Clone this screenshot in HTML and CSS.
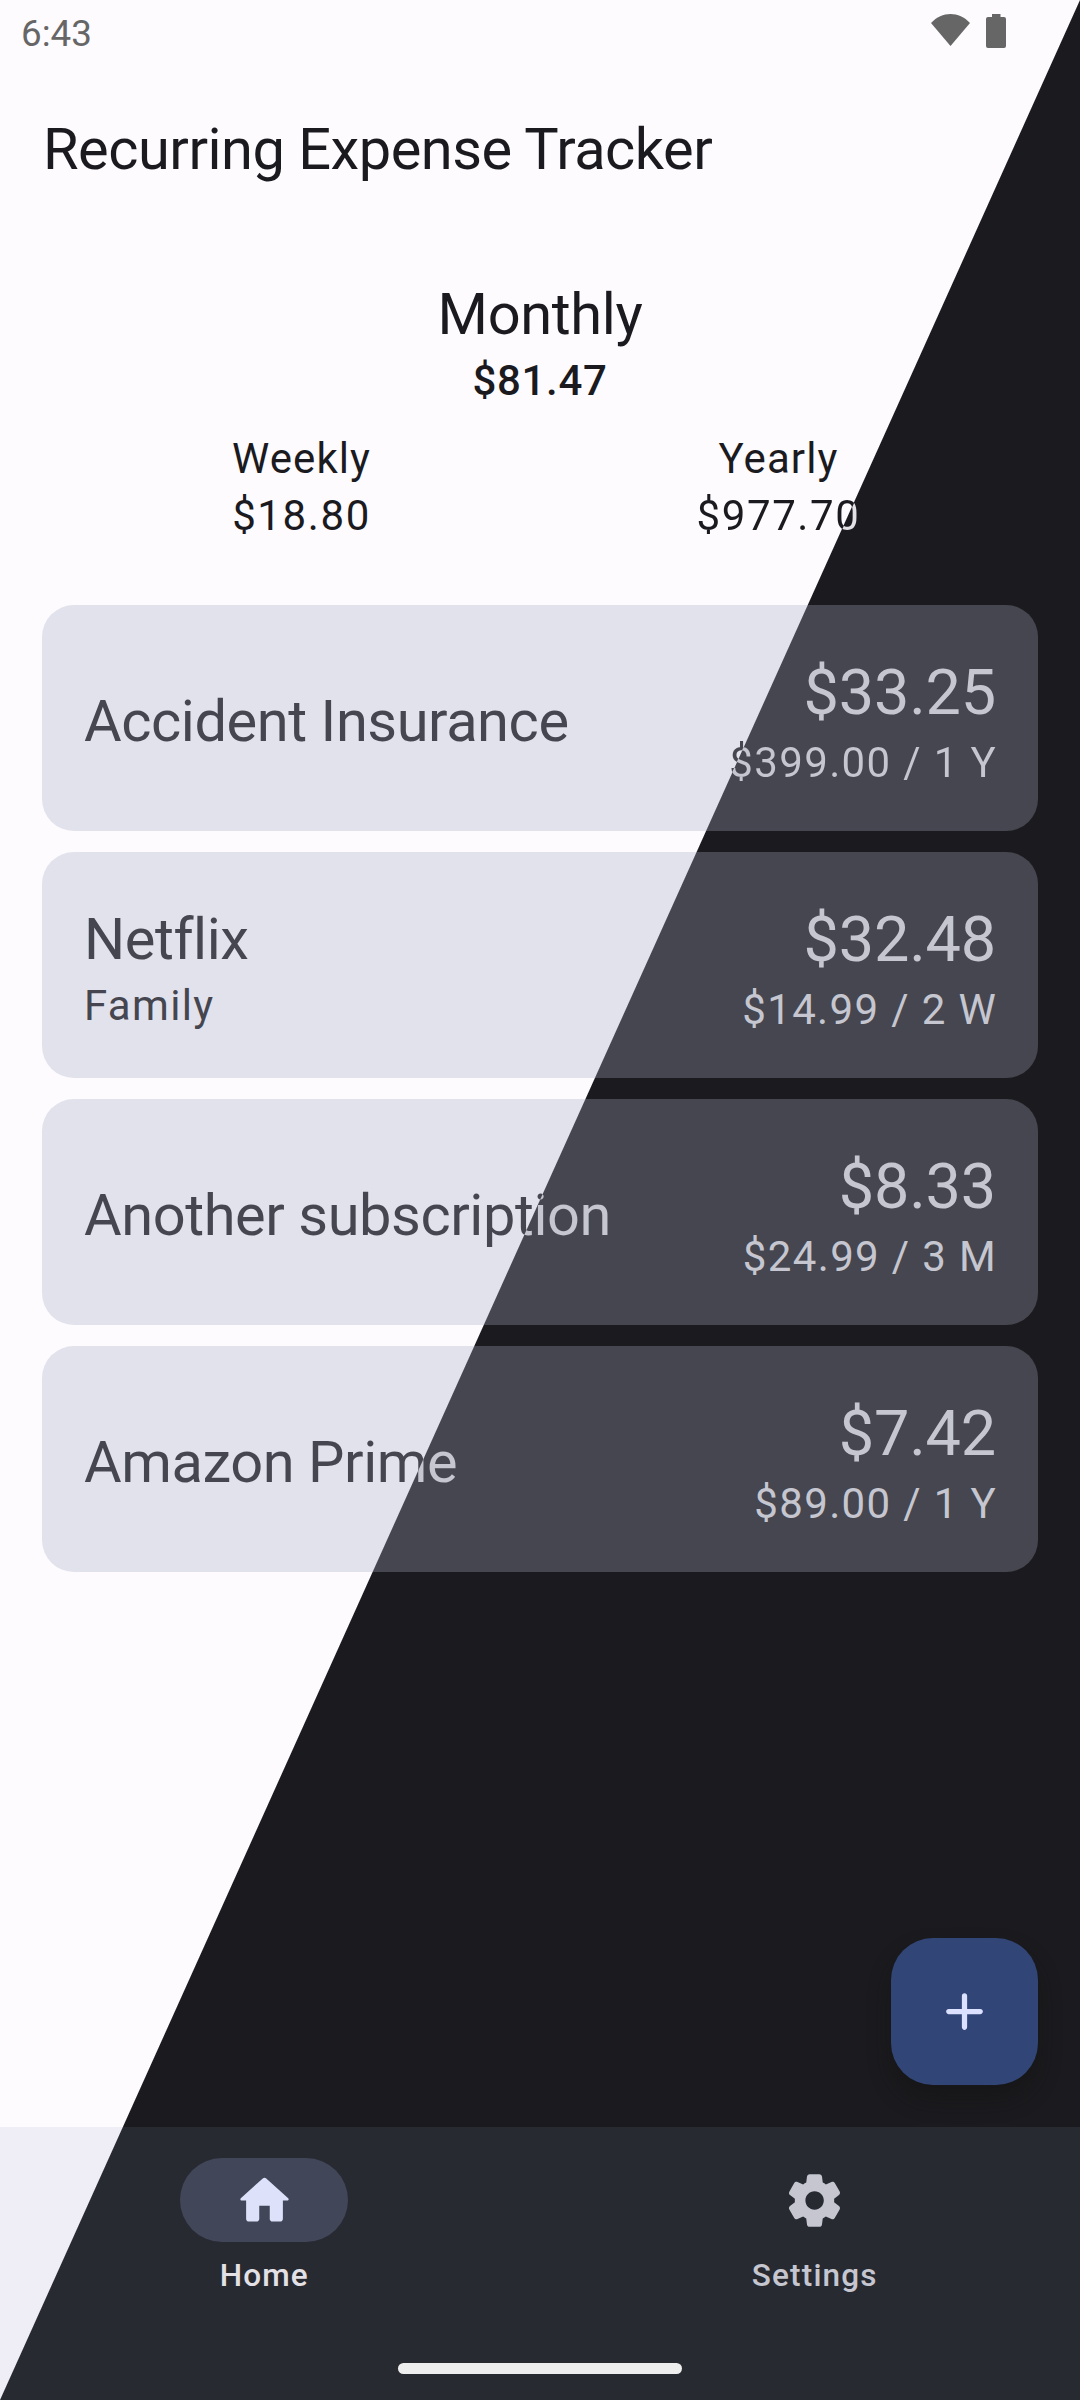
FILE: index.html
```html
<!DOCTYPE html>
<html lang="en">
<head>
<meta charset="utf-8">
<title>Recurring Expense Tracker</title>
<link rel="stylesheet" href="styles.css">
</head>
<body>
<div class="screen">
  <header class="status-bar">
    <span class="clock">6:43</span>
    <svg class="wifi" viewBox="0 0 39 32"><path d="M0 9C11-3 28-3 39 9L19.5 32Z"/></svg>
    <svg class="battery" viewBox="0 0 20 34"><path d="M6 0h8.5v3H18a2 2 0 0 1 2 2v27a2 2 0 0 1-2 2H2a2 2 0 0 1-2-2V5a2 2 0 0 1 2-2h4z"/></svg>
  </header>

  <h1 class="app-title">Recurring Expense Tracker</h1>

  <section class="summary">
    <div class="monthly">
      <div class="monthly-label">Monthly</div>
      <div class="monthly-value">$81.47</div>
    </div>
    <div class="periods">
      <div class="period"><span class="period-label">Weekly</span><span class="amount">$18.80</span></div>
      <div class="period"><span class="period-label">Yearly</span><span class="amount split-text on-surface">$977.70</span></div>
    </div>
  </section>

  <main class="expenses">
    <article class="card">
      <div class="info"><h2 class="name">Accident Insurance</h2></div>
      <div class="cost"><span class="price">$33.25</span><span class="cycle split-text">$399.00 / 1 Y</span></div>
    </article>
    <article class="card">
      <div class="info"><h2 class="name">Netflix</h2><p class="note">Family</p></div>
      <div class="cost"><span class="price">$32.48</span><span class="cycle">$14.99 / 2 W</span></div>
    </article>
    <article class="card">
      <div class="info"><h2 class="name split-text">Another subscription</h2></div>
      <div class="cost"><span class="price">$8.33</span><span class="cycle">$24.99 / 3 M</span></div>
    </article>
    <article class="card">
      <div class="info"><h2 class="name split-text">Amazon Prime</h2></div>
      <div class="cost"><span class="price">$7.42</span><span class="cycle">$89.00 / 1 Y</span></div>
    </article>
  </main>

  <div class="fab-row">
    <button class="fab" aria-label="Add expense">
      <svg class="icon" viewBox="0 0 24 24"><path d="M18 13h-5v5c0 .55-.45 1-1 1s-1-.45-1-1v-5H6c-.55 0-1-.45-1-1s.45-1 1-1h5V6c0-.55.45-1 1-1s1 .45 1 1v5h5c.55 0 1 .45 1 1s-.45 1-1 1z"/></svg>
    </button>
  </div>

  <footer class="bottom">
    <nav class="nav">
      <a class="nav-item active">
        <span class="pill"><svg class="icon" viewBox="0 0 24 24"><path d="M10 19v-5h4v5c0 .55.45 1 1 1h3c.55 0 1-.45 1-1v-7h1.7c.46 0 .68-.57.33-.87L12.67 3.6c-.38-.34-.96-.34-1.34 0l-8.36 7.53c-.34.3-.13.87.33.87H5v7c0 .55.45 1 1 1h3c.55 0 1-.45 1-1z"/></svg></span>
        <span class="nav-label">Home</span>
      </a>
      <a class="nav-item">
        <span class="pill"><svg class="icon" viewBox="0 0 24 24"><path d="M19.5 12c0-.23-.01-.45-.03-.68l1.86-1.41c.4-.3.51-.86.26-1.3l-1.87-3.23c-.25-.44-.79-.62-1.25-.42l-2.15.91c-.37-.26-.76-.49-1.17-.68l-.29-2.31c-.06-.5-.49-.88-.99-.88h-3.73c-.51 0-.94.38-1 .88l-.29 2.31c-.41.19-.8.42-1.17.68l-2.15-.91c-.46-.2-1-.02-1.25.42L2.41 8.62c-.25.44-.14.99.26 1.3l1.86 1.41c-.02.22-.03.44-.03.67s.01.45.03.68l-1.86 1.41c-.4.3-.51.86-.26 1.3l1.87 3.23c.25.44.79.62 1.25.42l2.15-.91c.37.26.76.49 1.17.68l.29 2.31c.06.5.49.88.99.88h3.73c.5 0 .93-.38.99-.88l.29-2.31c.41-.19.8-.42 1.17-.68l2.15.91c.46.2 1 .02 1.25-.42l1.87-3.23c.25-.44.14-.99-.26-1.3l-1.86-1.41c.03-.23.04-.45.04-.68zm-7.46 3.5c-1.93 0-3.5-1.57-3.5-3.5s1.57-3.5 3.5-3.5 3.5 1.57 3.5 3.5-1.57 3.5-3.5 3.5z"/></svg></span>
        <span class="nav-label">Settings</span>
      </a>
    </nav>
    <div class="gesture-bar"></div>
  </footer>
</div>
</body>
</html>
```

FILE: styles.css
```css
/* Light theme above the screen's diagonal, dark theme below it. Every themed
   surface paints the same viewport-fixed gradient so the edges line up. */
.screen,
.card,
.bottom,
.split-text {
  background-image: linear-gradient(to bottom right, var(--light) calc(50% - 0.5px), var(--dark) calc(50% + 0.5px));
  background-attachment: fixed;
}

* {
  box-sizing: border-box;
  margin: 0;
  padding: 0;
}

body {
  font-family: Roboto, "Liberation Sans", sans-serif;
  font-size: 42px;
  line-height: 57px;
  letter-spacing: 1.31px;
  color: #1b1b1f;
}

.screen {
  --light: #fefbff;
  --dark: #1b1b1f;
  width: 1080px;
  height: 2400px;
  display: flex;
  flex-direction: column;
  overflow: hidden;
}

.split-text {
  --light: #45464f;
  --dark: #c5c6d0;
  background-clip: text;
  -webkit-background-clip: text;
  -webkit-text-fill-color: transparent;
}

.split-text.on-surface {
  --light: #1b1b1f;
  --dark: #e4e1e6;
}

.status-bar {
  display: flex;
  align-items: flex-start;
  height: 63px;
  padding: 14px 74px 0 21px;
  fill: #666;
}

.clock {
  flex: 1;
  font-size: 36.75px;
  line-height: 40px;
  letter-spacing: 0;
  color: #666;
}

.wifi {
  width: 39px;
  height: 32px;
}

.battery {
  width: 20px;
  height: 34px;
  margin-left: 16px;
}

.app-title {
  padding: 49px 43px 0;
  font-size: 57.75px;
  font-weight: 400;
  line-height: 74px;
  letter-spacing: -0.49px;
}

.summary {
  height: 419px;
  padding: 91px 63px 0;
}

.monthly {
  text-align: center;
}

.monthly-label {
  font-size: 57.75px;
  line-height: 74px;
  letter-spacing: -0.35px;
}

.monthly-value {
  font-weight: 500;
  line-height: 60px;
  letter-spacing: 0.65px;
}

.periods {
  display: grid;
  grid-template-columns: 1fr 1fr;
  margin-top: 19px;
}

.period {
  display: flex;
  flex-direction: column;
  align-items: center;
}

.period-label {
  letter-spacing: 1.1px;
}

.amount {
  letter-spacing: 1.6px;
}

.expenses {
  display: flex;
  flex-direction: column;
  gap: 21px;
  padding: 0 42px;
  color: #45464f;
}

.card {
  --light: #e1e2ec;
  --dark: #45464f;
  display: flex;
  align-items: center;
  justify-content: space-between;
  height: 226px;
  padding: 0 41px 0 42px;
  border-radius: 32px;
}

.info {
  padding-top: 6px;
}

.name {
  font-size: 57.75px;
  font-weight: 400;
  line-height: 74px;
  letter-spacing: -0.43px;
}

.note {
  line-height: 59px;
}

.cost {
  display: flex;
  flex-direction: column;
  align-items: flex-end;
  padding-top: 5px;
  color: #c5c6d0;
}

.price {
  padding-right: 1px;
  font-size: 63px;
  line-height: 84px;
  letter-spacing: -0.2px;
}

.cycle {
  line-height: 55px;
  letter-spacing: 1.35px;
}

.fab-row {
  display: flex;
  justify-content: flex-end;
  margin-top: auto;
  padding: 0 42px 42px;
}

.fab {
  display: grid;
  place-items: center;
  width: 147px;
  height: 147px;
  border: 0;
  border-radius: 42px;
  background: #324577;
  box-shadow: 0 14px 22px rgba(18, 18, 18, 0.45);
  fill: #dbe1ff;
}

.icon {
  width: 63px;
  height: 63px;
}

.bottom {
  --light: #efedf6;
  --dark: #272a31;
  display: flex;
  flex-direction: column;
  align-items: center;
  justify-content: space-between;
  height: 273px;
  padding: 31px 0 26px;
}

.nav {
  display: grid;
  grid-template-columns: 1fr 1fr;
  gap: 22px;
  width: 100%;
  padding-right: 1px;
}

.nav-item {
  display: flex;
  flex-direction: column;
  align-items: center;
  gap: 13px;
  color: #c5c6d0;
  fill: #c5c6d0;
}

.nav-item.active {
  color: #e4e1e6;
  fill: #dde1f9;
}

.pill {
  display: grid;
  place-items: center;
  width: 168px;
  height: 84px;
  border-radius: 42px;
}

.active .pill {
  background: #424659;
}

.nav-label {
  font-size: 31.5px;
  font-weight: 500;
  line-height: 42px;
  letter-spacing: 1.15px;
}

.gesture-bar {
  width: 284px;
  height: 11px;
  border-radius: 6px;
  background: #eee;
}
```
